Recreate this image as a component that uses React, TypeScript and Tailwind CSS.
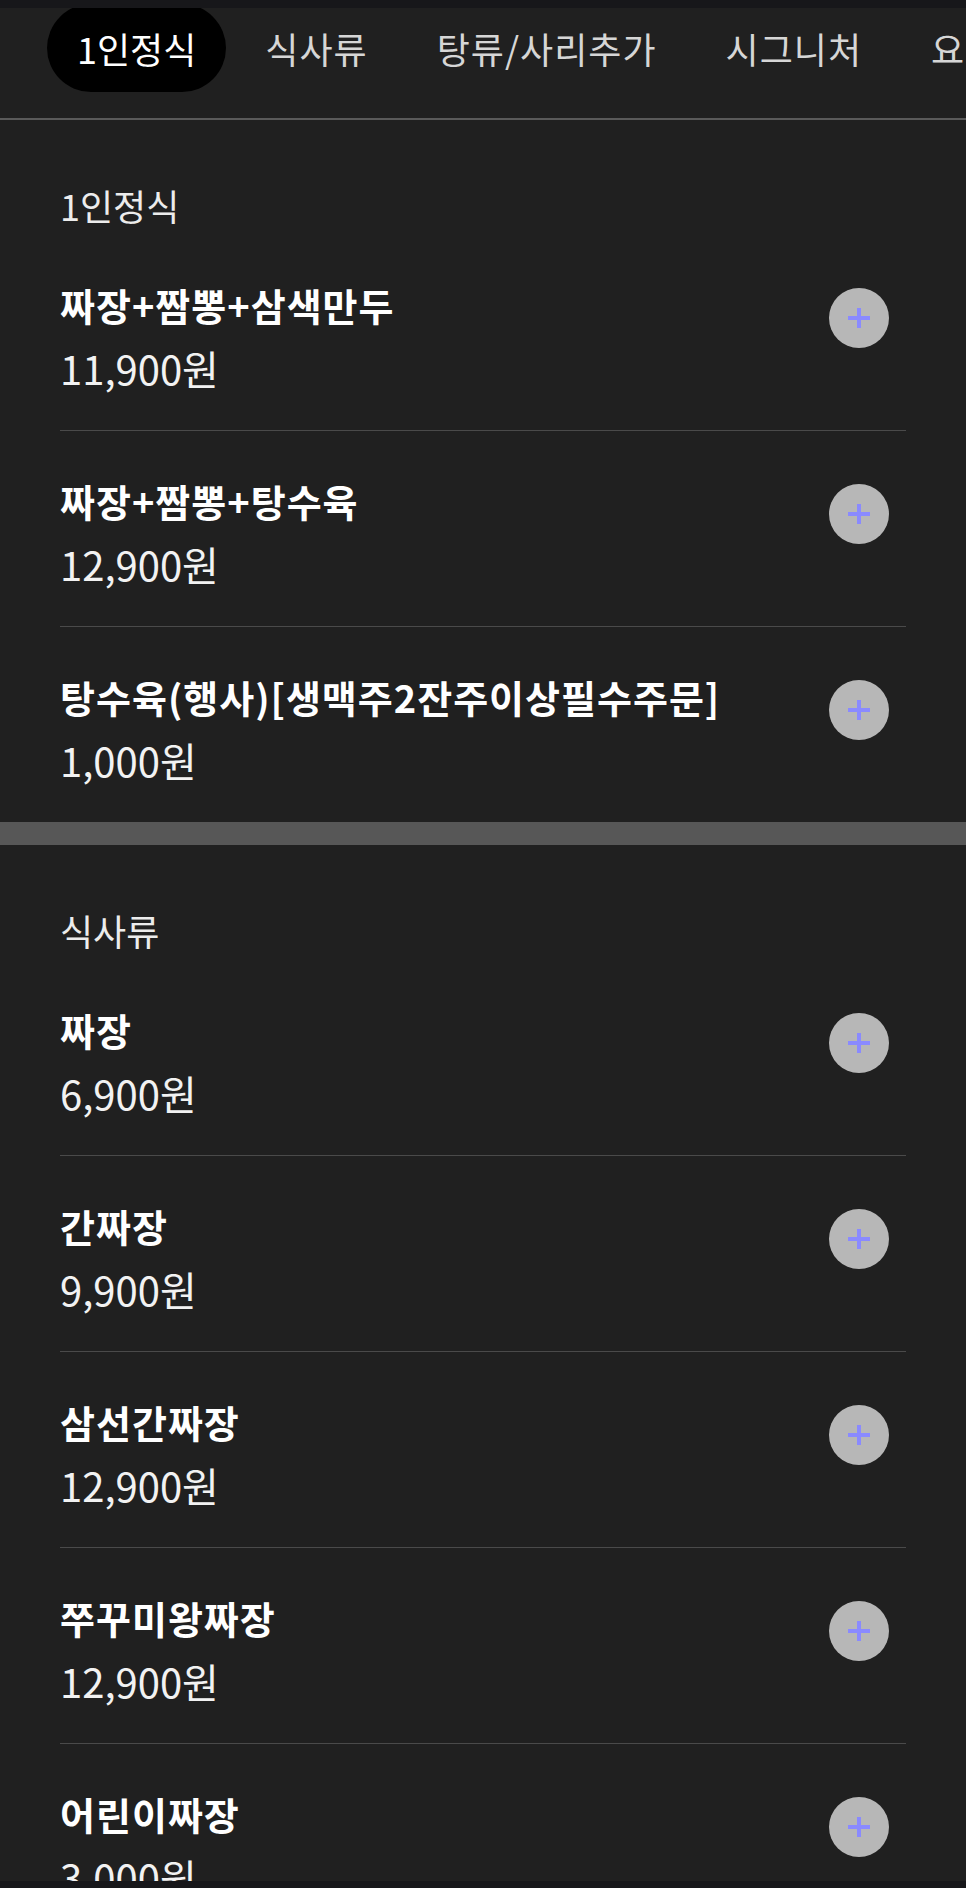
import React from "react";

type Item = { name: string; price: string };
type Section = { title: string; items: Item[] };

const tabs = ["1인정식", "식사류", "탕류/사리추가", "시그니처", "요리류"];

const sections: Section[] = [
  {
    title: "1인정식",
    items: [
      { name: "짜장+짬뽕+삼색만두", price: "11,900원" },
      { name: "짜장+짬뽕+탕수육", price: "12,900원" },
      { name: "탕수육(행사)[생맥주2잔주이상필수주문]", price: "1,000원" },
    ],
  },
  {
    title: "식사류",
    items: [
      { name: "짜장", price: "6,900원" },
      { name: "간짜장", price: "9,900원" },
      { name: "삼선간짜장", price: "12,900원" },
      { name: "쭈꾸미왕짜장", price: "12,900원" },
      { name: "어린이짜장", price: "3,000원" },
    ],
  },
];

const font = { fontFamily: '"Noto Sans CJK KR", "Noto Sans", sans-serif' };

const PlusButton = () => (
  <button className="w-[60px] h-[60px] rounded-full bg-[#b7b7b7] flex items-center justify-center shrink-0">
    <svg width="24" height="24" viewBox="0 0 24 24" fill="none" stroke="#8a8aff" strokeWidth="4">
      <path d="M12 2v20M1 12h22" />
    </svg>
  </button>
);

const MenuRow = ({ item, last }: { item: Item; last: boolean }) => (
  <div className={last ? "" : "border-b border-[#4a4a4a]"}>
    <div className="h-[195px] flex justify-between items-start">
      <div className="flex flex-col whitespace-nowrap">
        <span className="mt-[47px] h-[46px] leading-[46px] text-[38px] font-bold text-white tracking-[1px]">
          {item.name}
        </span>
        <span className="mt-[17px] h-[46px] leading-[46px] text-[40px] text-[#f2f2f2]">
          {item.price}
        </span>
      </div>
      <div className="mt-[53px] mr-[17px]">
        <PlusButton />
      </div>
    </div>
  </div>
);

export default function App() {
  return (
    <div className="relative w-[966px] h-[1888px] overflow-hidden bg-[#202020]" style={font}>
      {/* top strip */}
      <div className="absolute top-0 left-0 right-0 h-[8px] bg-[#17171a] z-10" />

      {/* tabs */}
      <div className="h-[120px] border-b-2 border-[#5a5a5a] overflow-hidden">
        <div className="flex gap-[9px] pl-[47px] pt-[4px] whitespace-nowrap">
          {tabs.map((t, i) => (
            <div
              key={t}
              className={
                i === 0
                  ? "h-[88px] px-[30px] rounded-full bg-black flex items-center text-[36px] text-white"
                  : "h-[88px] px-[30px] flex items-center text-[36px] tracking-[1px] text-[#d6d6d6]"
              }
            >
              {t}
            </div>
          ))}
        </div>
      </div>

      {sections.map((s, si) => (
        <div key={s.title}>
          {si > 0 && <div className="h-[23px] bg-[#575757]" />}
          <div className="pl-[60px]">
            <div className="h-[115px] pt-[61px] leading-[48px] text-[36px] text-[#ececec]">{s.title}</div>
            <div className="mr-[60px]">
              {s.items.map((it, i) => (
                <MenuRow key={it.name} item={it} last={i === s.items.length - 1} />
              ))}
            </div>
          </div>
        </div>
      ))}

      {/* bottom strip */}
      <div className="absolute bottom-0 left-0 right-0 h-[7px] bg-[#17171a]" />
    </div>
  );
}
